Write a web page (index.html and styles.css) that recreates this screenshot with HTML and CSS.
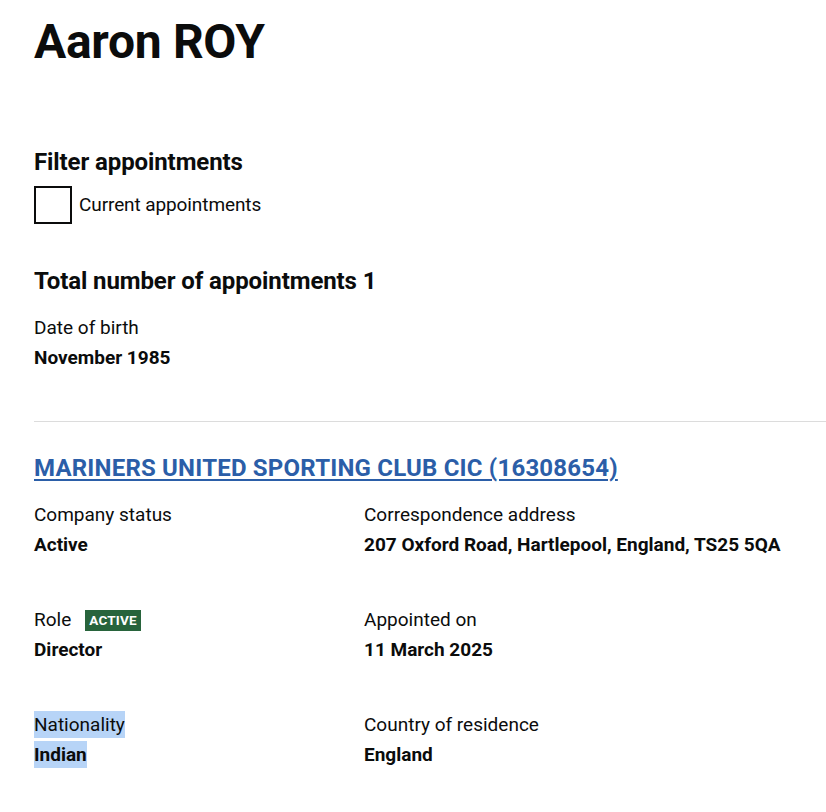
FILE: index.html
```html
<!DOCTYPE html>
<html lang="en">
<head>
<meta charset="utf-8">
<title>Aaron ROY - Appointments</title>
<link rel="stylesheet" href="styles.css">
</head>
<body>
<main class="page">
  <h1 class="title">Aaron ROY</h1>

  <section class="filter">
    <h2 class="heading">Filter appointments</h2>
    <label class="check">
      <span class="check__box"></span>
      <span class="check__label">Current appointments</span>
    </label>
  </section>

  <h2 class="heading total">Total number of appointments 1</h2>

  <dl class="item dob">
    <dt class="item__label">Date of birth</dt>
    <dd class="item__value">November 1985</dd>
  </dl>

  <hr class="rule">

  <section class="appointment">
    <h2 class="appointment__title"><a href="#" class="link">MARINERS UNITED SPORTING CLUB CIC (16308654)</a></h2>
    <div class="details">
      <dl class="item">
        <dt class="item__label">Company status</dt>
        <dd class="item__value">Active</dd>
      </dl>
      <dl class="item">
        <dt class="item__label">Correspondence address</dt>
        <dd class="item__value">207 Oxford Road, Hartlepool, England, TS25 5QA</dd>
      </dl>
      <dl class="item">
        <dt class="item__label item__label--tag">Role <span class="tag">Active</span></dt>
        <dd class="item__value">Director</dd>
      </dl>
      <dl class="item">
        <dt class="item__label">Appointed on</dt>
        <dd class="item__value">11 March 2025</dd>
      </dl>
      <dl class="item">
        <dt class="item__label"><span class="selected">Nationality</span></dt>
        <dd class="item__value"><span class="selected">Indian</span></dd>
      </dl>
      <dl class="item">
        <dt class="item__label">Country of residence</dt>
        <dd class="item__value">England</dd>
      </dl>
    </div>
  </section>
</main>
</body>
</html>
```

FILE: styles.css
```css
html, body {
  margin: 0;
  padding: 0;
  background: #ffffff;
}

body {
  font-family: Roboto, "Liberation Sans", Arial, sans-serif;
  color: #0b0c0c;
  font-size: 19px;
  line-height: 30px;
}

.page {
  padding: 14px 0 0 34px;
}

.title {
  margin: 0;
  font-size: 48px;
  line-height: 56px;
  font-weight: 700;
  letter-spacing: -0.3px;
}

.heading {
  margin: 0;
  font-size: 24px;
  line-height: 30px;
  font-weight: 700;
  letter-spacing: -0.1px;
}

.filter {
  margin-top: 77px;
}

.check {
  display: flex;
  align-items: center;
  gap: 7px;
  margin-top: 9px;
}

.check__box {
  box-sizing: border-box;
  width: 38px;
  height: 38px;
  border: 2px solid #0b0c0c;
  flex: none;
}

.check__label {
  letter-spacing: -0.1px;
}

.total {
  margin-top: 42px;
}

.item {
  margin: 0;
}

.item__label {
  margin: 0;
  font-weight: 400;
}

.item__value {
  margin: 0;
  font-weight: 700;
}

.dob {
  margin-top: 17px;
}

.rule {
  margin: 48px 0 0 0;
  border: 0;
  border-top: 1px solid #dcdcdc;
  height: 0;
}

.appointment__title {
  margin: 31px 0 0 0;
  font-size: 24px;
  line-height: 30px;
  font-weight: 700;
  letter-spacing: 0.2px;
}

.link {
  color: #2b5ea8;
  text-decoration: underline;
  text-underline-offset: 3px;
  text-decoration-thickness: 2px;
}

.details {
  display: grid;
  grid-template-columns: 330px 1fr;
  row-gap: 45px;
  margin-top: 17px;
}

.item__label--tag {
  display: flex;
  align-items: center;
  gap: 14px;
}

.tag {
  display: inline-block;
  background: #28643c;
  color: #ffffff;
  font-size: 13.5px;
  line-height: 21px;
  font-weight: 700;
  text-transform: uppercase;
  padding: 0 4px;
  letter-spacing: 0.2px;
}

.selected {
  background: #b7d4f7;
  padding: 2px 0;
}
```
